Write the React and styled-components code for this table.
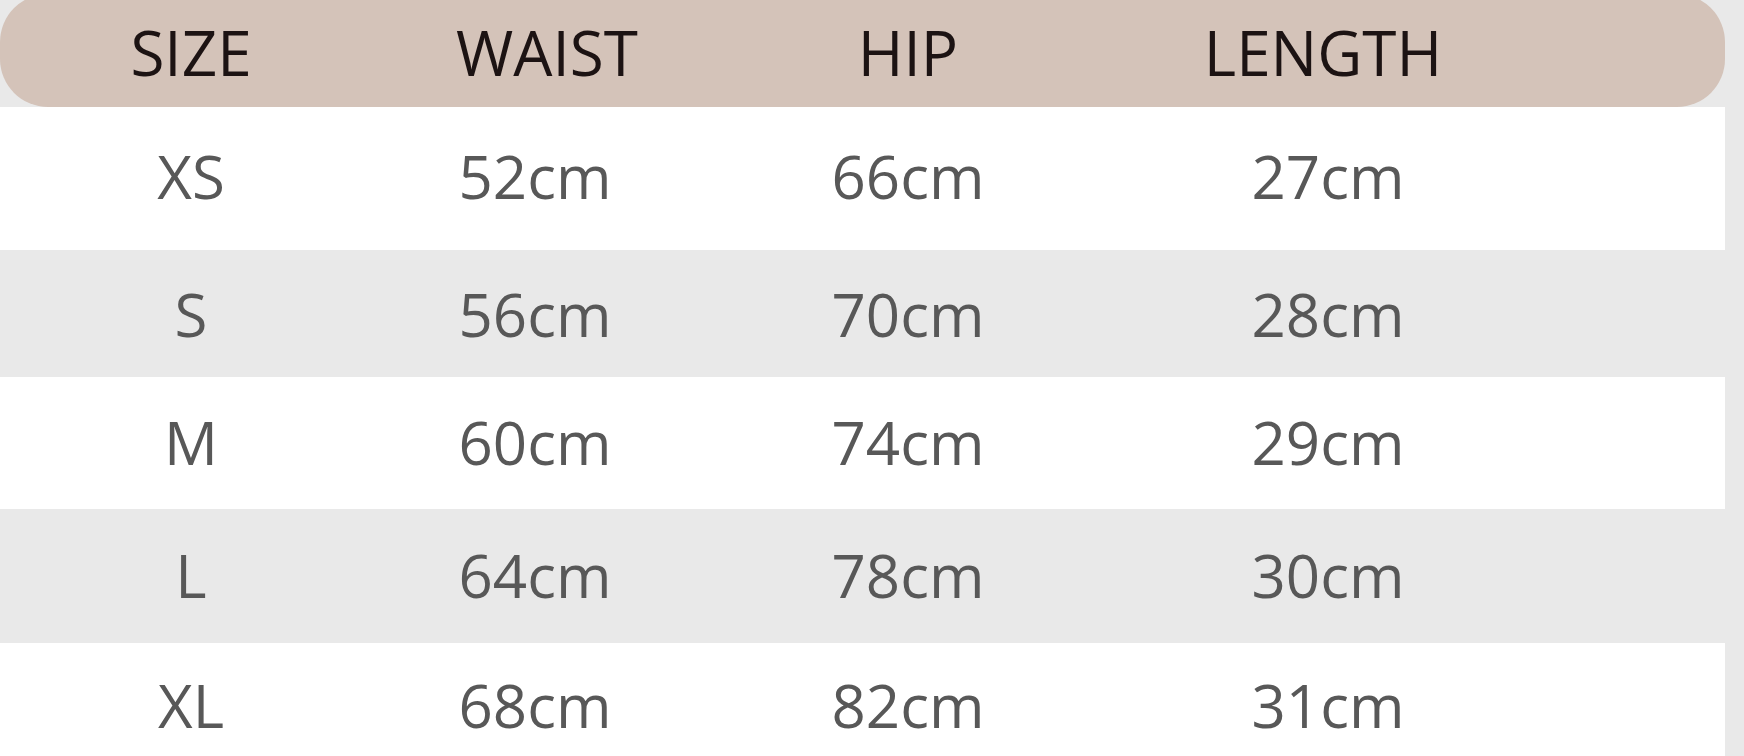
import styled, { createGlobalStyle } from "styled-components";

const GlobalStyle = createGlobalStyle`
  html, body {
    margin: 0;
    padding: 0;
    background: #e9e9e9;
    overflow: hidden;
  }
`;

const Page = styled.div`
  width: 1744px;
  height: 756px;
  overflow: hidden;
  background: #e9e9e9;
  font-family: "Open Sans", "Noto Sans", sans-serif;
`;

const Chart = styled.div`
  width: 1725px;
  display: flex;
  flex-direction: column;
`;

const HeaderRow = styled.div`
  display: grid;
  grid-template-columns: 382px 330px 392px 438px;
  align-items: center;
  height: 113px;
  margin-top: -6px;
  padding-top: 2px;
  box-sizing: border-box;
  border-radius: 48px;
  background: #d4c3b9;
  color: #1c1313;
  font-size: 62px;
  font-weight: 500;
`;

const Row = styled.div`
  display: grid;
  grid-template-columns: 382px 306px 440px 400px;
  align-items: center;
  height: ${(props) => props.$height}px;
  padding-bottom: ${(props) => props.$lift}px;
  box-sizing: border-box;
  background: ${(props) => (props.$shaded ? "#e9e9e9" : "#ffffff")};
  color: #585858;
  font-size: 60px;
`;

const Cell = styled.div`
  text-align: center;
  line-height: 1;
`;

const columns = ["SIZE", "WAIST", "HIP", "LENGTH"];

const sizes = [
  { size: "XS", waist: "52cm", hip: "66cm", length: "27cm", height: 143, lift: 6 },
  { size: "S", waist: "56cm", hip: "70cm", length: "28cm", height: 127, lift: 0 },
  { size: "M", waist: "60cm", hip: "74cm", length: "29cm", height: 132, lift: 2 },
  { size: "L", waist: "64cm", hip: "78cm", length: "30cm", height: 134, lift: 2 },
  { size: "XL", waist: "68cm", hip: "82cm", length: "31cm", height: 124, lift: 0 },
];

export default function App() {
  return (
    <Page>
      <GlobalStyle />
      <Chart>
        <HeaderRow>
          {columns.map((label) => (
            <Cell key={label}>{label}</Cell>
          ))}
        </HeaderRow>
        {sizes.map((row, i) => (
          <Row
            key={row.size}
            $height={row.height}
            $lift={row.lift}
            $shaded={i % 2 === 1}
          >
            <Cell>{row.size}</Cell>
            <Cell>{row.waist}</Cell>
            <Cell>{row.hip}</Cell>
            <Cell>{row.length}</Cell>
          </Row>
        ))}
      </Chart>
    </Page>
  );
}
